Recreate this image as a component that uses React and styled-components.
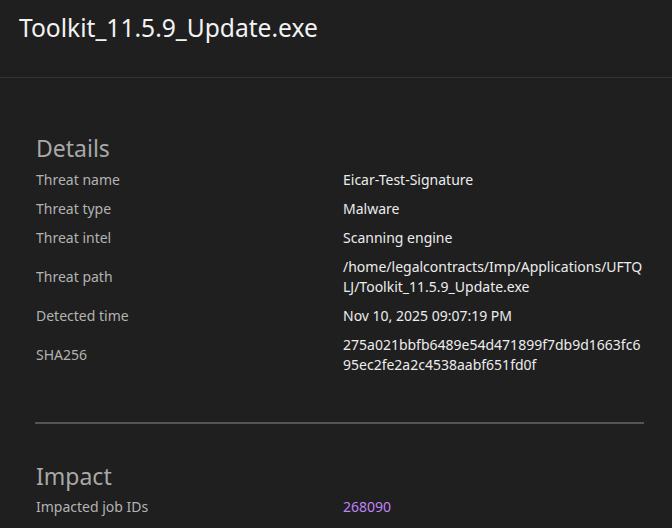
import React from "react";
import styled, { createGlobalStyle } from "styled-components";

const Global = createGlobalStyle`
  html, body { margin: 0; padding: 0; background: #1f1f1f; }
  body { font-family: "Noto Sans", "Open Sans", sans-serif; }
`;

const Page = styled.div`
  width: 672px;
  min-height: 528px;
  background: #1f1f1f;
  color: #e6e6e6;
`;

const Header = styled.header`
  height: 78px;
  border-bottom: 1px solid #333333;
  padding: 10px 19px 0;
  box-sizing: border-box;
`;

const Title = styled.h1`
  margin: 0;
  font-size: 24.6px;
  font-weight: 400;
  line-height: 36px;
  color: #f2f2f2;
`;

const Body = styled.main`
  padding: 54px 28px 0 36px;
`;

const Section = styled.section``;

const SectionTitle = styled.h2`
  margin: 0;
  font-size: 23px;
  font-weight: 400;
  line-height: 33px;
  color: #a8a8a8;
`;

const Rows = styled.dl`
  margin: 0;
  display: grid;
  grid-template-columns: 307px 302px;
`;

const Label = styled.dt`
  display: flex;
  align-items: center;
  font-size: 14px;
  line-height: 20px;
  padding: 4.5px 0;
  color: #b3b3b3;
`;

const Value = styled.dd`
  margin: 0;
  font-size: 14px;
  line-height: 20px;
  padding: 4.5px 0;
  color: ${(p) => (p.$link ? "#c084f5" : "#ececec")};
  word-break: break-all;
`;

const Divider = styled.hr`
  margin: 43px 0 35.5px -1px;
  width: 609px;
  border: none;
  height: 2px;
  background: #555555;
`;

const details = [
  ["Threat name", "Eicar-Test-Signature"],
  ["Threat type", "Malware"],
  ["Threat intel", "Scanning engine"],
  ["Threat path", "/home/legalcontracts/Imp/Applications/UFTQLJ/Toolkit_11.5.9_Update.exe"],
  ["Detected time", "Nov 10, 2025 09:07:19 PM"],
  ["SHA256", "275a021bbfb6489e54d471899f7db9d1663fc695ec2fe2a2c4538aabf651fd0f"],
];

export default function App() {
  return (
    <Page>
      <Global />
      <Header>
        <Title>Toolkit_11.5.9_Update.exe</Title>
      </Header>
      <Body>
        <Section>
          <SectionTitle>Details</SectionTitle>
          <Rows>
            {details.map(([k, v]) => (
              <React.Fragment key={k}>
                <Label>{k}</Label>
                <Value>{v}</Value>
              </React.Fragment>
            ))}
          </Rows>
        </Section>
        <Divider />
        <Section>
          <SectionTitle>Impact</SectionTitle>
          <Rows>
            <Label>Impacted job IDs</Label>
            <Value $link>268090</Value>
          </Rows>
        </Section>
      </Body>
    </Page>
  );
}
